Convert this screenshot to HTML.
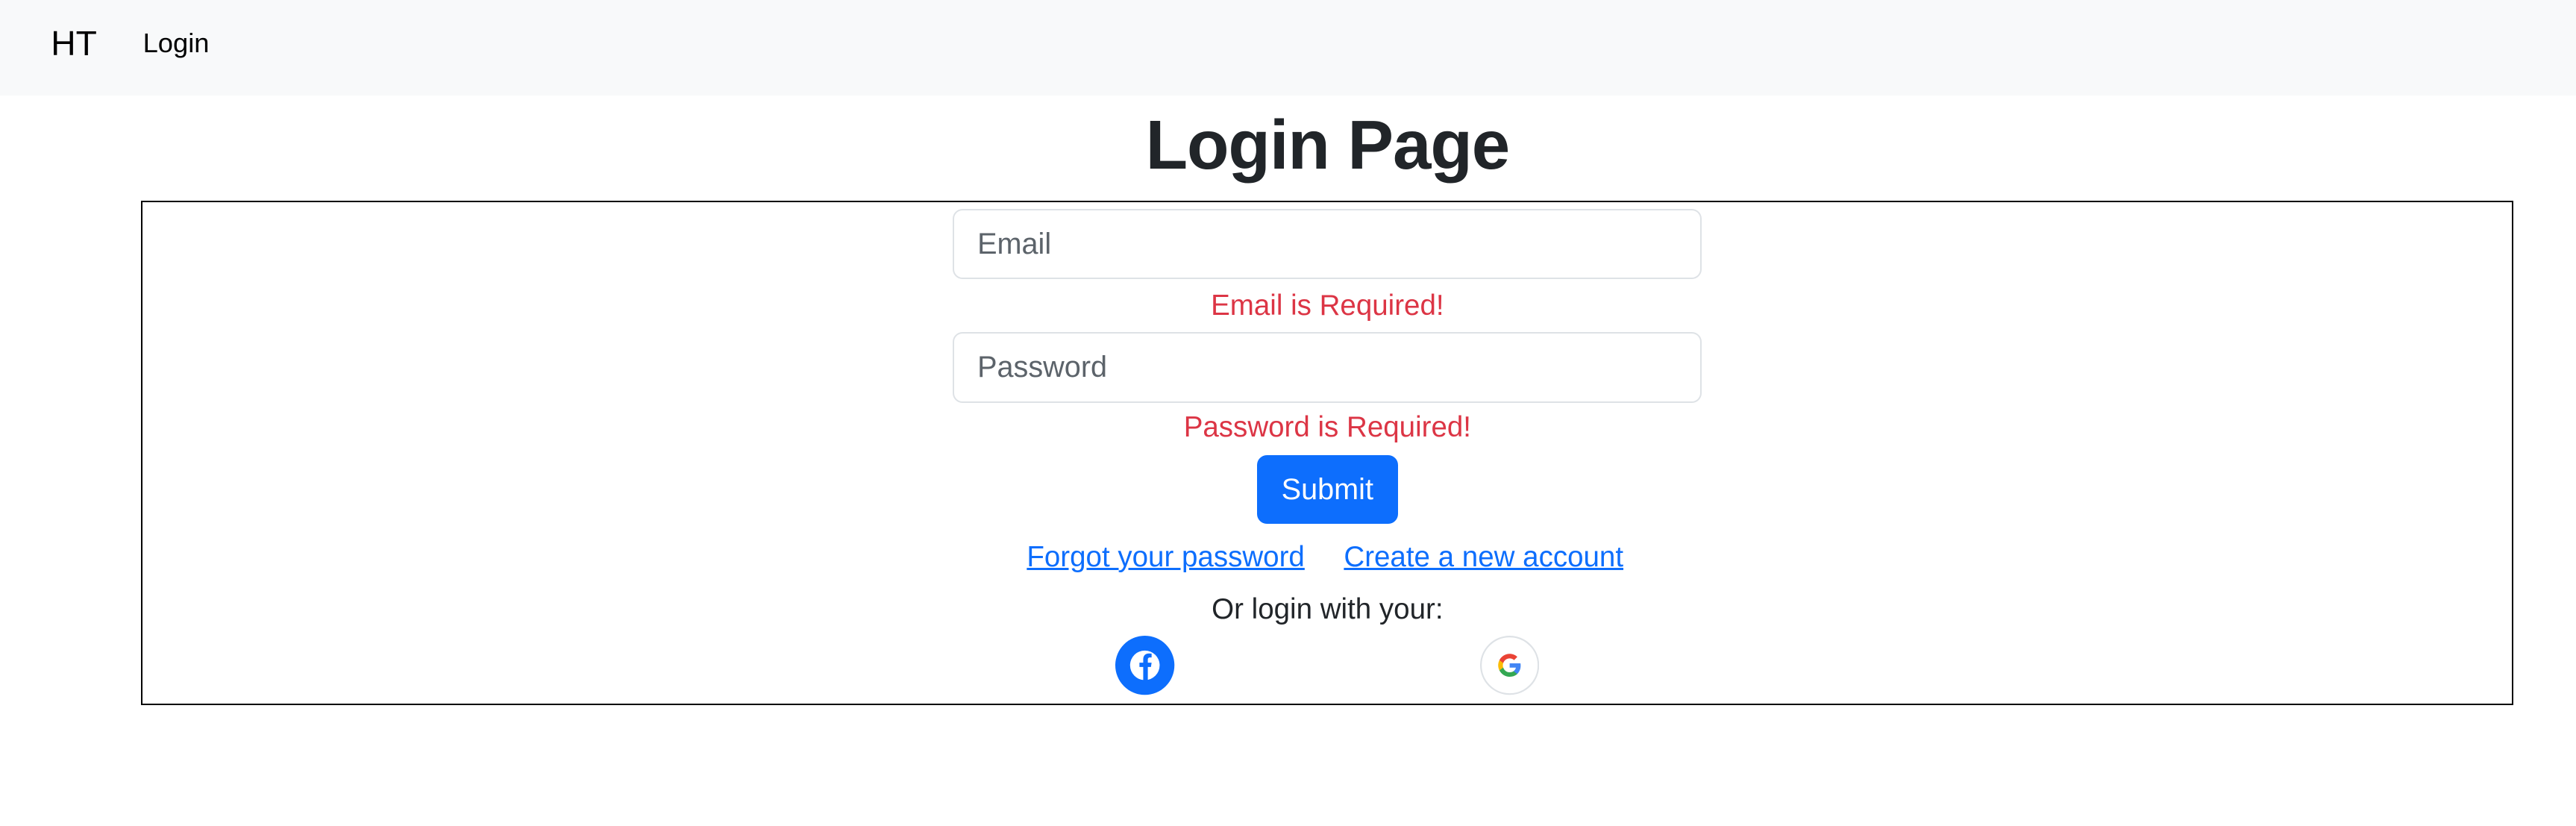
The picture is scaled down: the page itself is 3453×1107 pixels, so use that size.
<!DOCTYPE html>
<html><head><meta charset="utf-8"><style>
html,body{margin:0;padding:0;background:#fff;overflow:hidden;width:3453px;height:1107px}
#w{zoom:2.20217;width:1568px;height:503px;position:relative;font-family:"Liberation Sans",sans-serif;color:#212529}
.a{position:absolute}
.nav{left:0;top:0;width:1568px;height:58px;background:#f8f9fa}
.inp{border:1px solid #dee2e6;border-radius:6px;background:#fff;box-sizing:border-box;width:456px;height:43px;left:580px;font-size:18px;color:#5c636a;padding-left:14px;line-height:41px}
.err{color:#dc3545;font-size:17.5px;width:1616px;text-align:center;left:0}
a{color:#0d6efd;text-decoration:underline}
</style></head><body><div id="w">
<div class="a nav"></div>
<div class="a" style="left:31px;top:14px;font-size:21px;color:#000">HT</div>
<div class="a" style="left:87px;top:17px;font-size:16.5px;color:#000">Login</div>
<div class="a" style="left:0;width:1616px;text-align:center;top:64px;font-size:42px;font-weight:bold;letter-spacing:-0.5px">Login Page</div>
<div class="a" style="left:86px;top:122px;width:1444px;height:307px;border:1px solid #000;box-sizing:border-box"></div>
<div class="a inp" style="top:127px">Email</div>
<div class="a err" style="top:176px">Email is Required!</div>
<div class="a inp" style="top:202px">Password</div>
<div class="a err" style="top:250px">Password is Required!</div>
<div class="a" style="left:765px;top:277px;width:86px;height:42px;background:#0d6efd;border-radius:6px;color:#fff;font-size:18px;text-align:center;line-height:42px">Submit</div>
<div class="a" style="left:625px;top:329px;font-size:17.5px;white-space:nowrap"><a>Forgot your password</a></div>
<div class="a" style="left:818px;top:329px;font-size:17.5px;white-space:nowrap"><a>Create a new account</a></div>
<div class="a" style="left:0;width:1616px;text-align:center;top:361px;font-size:17.5px">Or login with your:</div>
<svg class="a" style="left:679px;top:387px" width="36" height="36" viewBox="0 0 36 36">
<circle cx="18" cy="18" r="18" fill="#0d6efd"/>
<circle cx="18" cy="18" r="9" fill="#fff"/>
<path d="M17 27V19h-2.3v-2.6H17v-2c0-2.4 1.4-3.6 3.5-3.6.8 0 1.6.1 1.6.1v2.3h-1c-1 0-1.3.6-1.3 1.3v1.9h2.3l-.4 2.6h-1.9V27z" fill="#0d6efd"/>
</svg>
<svg class="a" style="left:901px;top:387px" width="36" height="36" viewBox="0 0 36 36">
<circle cx="18" cy="18" r="17.5" fill="#fff" stroke="#dee2e6"/>
<g transform="translate(11,11) scale(0.583)">
<path d="M23.5 12.3c0-.8-.1-1.6-.2-2.3H12v4.4h6.5c-.3 1.5-1.1 2.7-2.4 3.6v3h3.9c2.2-2.1 3.5-5.1 3.5-8.7z" fill="#4285F4"/>
<path d="M12 24c3.2 0 6-1.1 8-2.9l-3.9-3c-1.1.7-2.5 1.2-4.1 1.2-3.1 0-5.8-2.1-6.7-5H1.3v3.1C3.3 21.3 7.3 24 12 24z" fill="#34A853"/>
<path d="M5.3 14.3c-.3-.7-.4-1.5-.4-2.3s.1-1.6.4-2.3V6.6H1.3C.5 8.2 0 10.1 0 12s.5 3.8 1.3 5.4z" fill="#FBBC05"/>
<path d="M12 4.8c1.8 0 3.3.6 4.6 1.8l3.4-3.4C18 1.2 15.2 0 12 0 7.3 0 3.3 2.7 1.3 6.6l4 3.1c.9-2.8 3.6-4.9 6.7-4.9z" fill="#EA4335"/>
</g></svg>
</div></body></html>
